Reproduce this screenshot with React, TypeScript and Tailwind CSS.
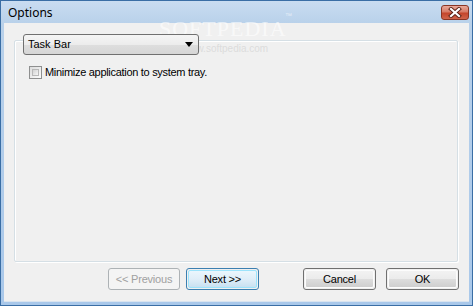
import React from "react";

const font = { fontFamily: '"Liberation Sans", Arial, sans-serif' };

function Btn({ children, variant }: { children: React.ReactNode; variant?: "disabled" | "default" }) {
  if (variant === "disabled") {
    return (
      <div className="w-[73px] h-[22px] rounded-[3px] border border-[#adb2b5] bg-[#f4f4f4] flex items-center justify-center text-[11px] tracking-[-0.2px] text-[#a0a0a0]">
        {children}
      </div>
    );
  }
  if (variant === "default") {
    return (
      <div className="w-[73px] h-[22px] rounded-[3px] border border-[#3c7fb1] p-px">
        <div className="w-full h-full rounded-[2px] border border-[#9ce3fb] bg-gradient-to-b from-[#eaf6fd] via-[#e0eef8] to-[#c9e1f1] flex items-center justify-center text-[11px] tracking-[-0.2px] text-black">
          {children}
        </div>
      </div>
    );
  }
  return (
    <div className="w-[73px] h-[22px] rounded-[3px] border border-[#707070] p-px">
      <div className="w-full h-full rounded-[2px] border border-[#fcfcfc] bg-[linear-gradient(to_bottom,#f2f2f2_0%,#ebebeb_50%,#dddddd_51%,#cfcfcf_100%)] flex items-center justify-center text-[11px] tracking-[-0.2px] text-black">
        {children}
      </div>
    </div>
  );
}

export default function App() {
  return (
    <div className="w-[473px] h-[306px] bg-[#3a6ea5] p-px" style={font}>
      <div className="relative w-full h-full bg-[linear-gradient(to_bottom,#c9dcf1_0px,#b9d1ea_22px,#a9c8ea_100%)] flex flex-col px-[3px] pb-[3px]">
        {/* title bar */}
        <div className="h-[22px] flex items-center justify-between shrink-0">
          <span className="pl-[4px] pt-[1px] text-[12px] text-black" style={{ fontFamily: '"Noto Sans", "Open Sans", sans-serif' }}>
            Options
          </span>
          <div className="mt-[1px] w-[28px] h-[15px] rounded-[3px] border border-[#8a3525] bg-[linear-gradient(to_bottom,#e9a99b_0%,#d67a66_45%,#c4452c_55%,#d0644b_100%)] flex items-center justify-center">
            <svg width="14" height="11" viewBox="0 0 14 11">
              <path d="M3 2 L11 9 M11 2 L3 9" stroke="#5a1f14" strokeWidth="4" strokeLinecap="square" />
              <path d="M3 2 L11 9 M11 2 L3 9" stroke="#ffffff" strokeWidth="2.2" strokeLinecap="square" />
            </svg>
          </div>
        </div>

        {/* content */}
        <div className="flex-1 bg-[#f0f0f0] border-b border-[#d9e4ef] flex flex-col px-[10px] pt-[11px]">
          <div className="mr-[1px] h-[228px] flex flex-col">
            <div className="ml-[9px] w-[176px] h-[21px] rounded-[3px] border border-[#707070] bg-[linear-gradient(to_bottom,#f5f5f5_0%,#ececec_50%,#dedede_51%,#d6d6d6_100%)] flex items-center justify-between pl-[4px] pr-[5px] relative z-10 text-[11px] text-black">
              <span>Task Bar</span>
              <svg width="8" height="5" viewBox="0 0 8 5">
                <path d="M0 0 H8 L4 5 Z" fill="#000" />
              </svg>
            </div>
            <div className="-mt-[15px] flex-1 border border-[#d5dfe5] shadow-[inset_1px_1px_0_#ffffff,1px_1px_0_#ffffff] rounded-[2px] pt-[23px] pl-[14px]">
              <div className="flex items-center gap-[3px]">
                <div className="w-[13px] h-[13px] border border-[#8e8f8f] bg-[linear-gradient(135deg,#dcdcdc,#fbfbfb)] p-[2px]">
                  <div className="w-full h-full border border-[#b8b8b8] bg-[linear-gradient(135deg,#d2d2d2,#f5f5f5)]" />
                </div>
                <span className="text-[11px] tracking-[-0.3px] text-black">Minimize application to system tray.</span>
              </div>
            </div>
          </div>

          <div className="mt-[6px] flex items-center pl-[94px]">
            <Btn variant="disabled">&lt;&lt; Previous</Btn>
            <div className="ml-[6px]">
              <Btn variant="default">Next &gt;&gt;</Btn>
            </div>
            <div className="ml-[44px]">
              <Btn>Cancel</Btn>
            </div>
            <div className="ml-[10px]">
              <Btn>OK</Btn>
            </div>
          </div>
        </div>

        {/* watermark */}
        <div className="absolute left-[158px] top-[11px] text-[22px] tracking-[1px] text-white/60 pointer-events-none" style={{ fontFamily: '"Liberation Serif", serif' }}>
          SOFTPEDIA
        </div>
        <div className="absolute left-[284px] top-[10px] text-[7px] text-white/60 pointer-events-none">™</div>
        <div className="absolute left-[181px] top-[40px] text-[10px] text-[#dcdcdc] pointer-events-none">www.softpedia.com</div>
      </div>
    </div>
  );
}
